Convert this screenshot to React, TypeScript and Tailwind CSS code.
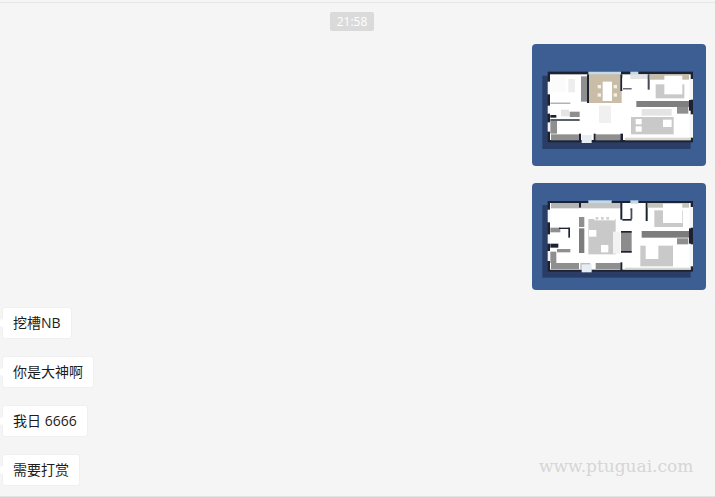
type Block = [number, number, number, number, string]

const WALL = '#1d2433'
const GREY = '#c9c9c9'
const DARK = '#8f8f8f'
const TAN = '#c9bda8'
const PALE = '#c4dbe6'
const LINE = '#e4e4e4'

// coordinates are in 3x px of the reference crop
const planOne: Block[] = [
    [52, 122, 445, 220, '#2a3d66'],
    [68, 110, 436, 212, WALL],
    [75, 118, 422, 197, '#ffffff'],
    [68, 140, 8, 38, '#f4f6f8'],
    [68, 212, 8, 24, '#f4f6f8'],
    [68, 262, 8, 28, '#f4f6f8'],
    [494, 132, 10, 62, '#f4f6f8'],
    [494, 238, 10, 70, '#f4f6f8'],
    [190, 110, 98, 10, PALE],
    [316, 110, 24, 12, PALE],
    [190, 118, 100, 86, TAN],
    [233, 140, 28, 58, '#ffffff'],
    [218, 150, 10, 10, '#f4f0e8'],
    [218, 175, 10, 10, '#f4f0e8'],
    [266, 150, 10, 10, '#f4f0e8'],
    [266, 175, 10, 10, '#f4f0e8'],
    [130, 132, 20, 40, '#eeeeee'],
    [76, 122, 46, 50, '#fbfbfb'],
    [168, 124, 20, 76, DARK],
    [186, 118, 6, 86, WALL],
    [286, 118, 6, 50, WALL],
    [292, 128, 24, 36, '#ffffff'],
    [294, 160, 26, 3, WALL],
    [316, 118, 54, 14, LINE],
    [368, 118, 6, 46, '#444a58'],
    [374, 118, 118, 16, '#c4bba8'],
    [392, 148, 86, 42, GREY],
    [418, 122, 54, 56, '#ffffff'],
    [334, 198, 158, 18, '#7f7f7f'],
    [492, 195, 10, 32, WALL],
    [456, 216, 34, 20, DARK],
    [350, 222, 90, 20, LINE],
    [318, 246, 128, 52, GREY],
    [332, 252, 18, 16, '#ffffff'],
    [332, 274, 18, 16, '#ffffff'],
    [414, 254, 26, 22, '#ffffff'],
    [222, 212, 36, 52, '#f0f0f0'],
    [76, 203, 60, 3, '#8a8e98'],
    [76, 240, 18, 8, WALL],
    [108, 224, 24, 20, LINE],
    [134, 230, 30, 16, DARK],
    [76, 252, 88, 6, '#5a5f6c'],
    [76, 258, 20, 38, DARK],
    [96, 268, 68, 28, '#ffffff'],
    [78, 298, 88, 18, DARK],
    [212, 298, 74, 18, DARK],
    [162, 296, 6, 22, WALL],
    [206, 296, 6, 22, WALL],
    [286, 296, 8, 24, WALL],
    [170, 300, 30, 24, '#e6eef4'],
    [300, 308, 197, 8, '#d8d8d0'],
]

const planTwo: Block[] = [
    [52, 90, 445, 218, '#2a3d66'],
    [68, 78, 436, 212, WALL],
    [75, 84, 422, 200, '#ffffff'],
    [68, 104, 8, 38, '#f4f6f8'],
    [68, 178, 8, 28, '#f4f6f8'],
    [68, 228, 8, 30, '#f4f6f8'],
    [494, 96, 10, 62, '#f4f6f8'],
    [494, 208, 10, 66, '#f4f6f8'],
    [190, 76, 70, 8, PALE],
    [316, 76, 24, 10, PALE],
    [78, 84, 86, 16, '#b4b4b4'],
    [168, 84, 120, 16, '#c4c4c4'],
    [162, 80, 6, 18, WALL],
    [190, 132, 82, 106, GREY],
    [208, 108, 62, 28, '#ffffff'],
    [212, 126, 8, 8, '#d0d0d0'],
    [228, 126, 8, 8, '#d0d0d0'],
    [244, 126, 8, 8, '#d0d0d0'],
    [192, 165, 22, 20, '#ffffff'],
    [228, 210, 22, 22, '#ffffff'],
    [264, 170, 22, 66, '#f2f2f2'],
    [162, 126, 16, 30, DARK],
    [162, 160, 16, 74, '#7c7c7c'],
    [286, 80, 6, 54, WALL],
    [292, 132, 28, 5, WALL],
    [316, 100, 6, 32, '#444a58'],
    [296, 106, 20, 24, '#ffffff'],
    [362, 80, 6, 58, WALL],
    [368, 84, 124, 14, '#c4c4bc'],
    [388, 106, 86, 50, GREY],
    [414, 86, 58, 58, '#ffffff'],
    [350, 168, 142, 20, '#7c7c7c'],
    [492, 160, 10, 46, WALL],
    [456, 190, 34, 18, DARK],
    [346, 212, 98, 62, GREY],
    [362, 206, 38, 46, '#ffffff'],
    [288, 170, 32, 62, '#8c8c8c'],
    [288, 168, 32, 5, WALL],
    [288, 228, 32, 5, WALL],
    [76, 158, 30, 14, DARK],
    [102, 158, 32, 4, WALL],
    [130, 158, 5, 30, WALL],
    [76, 206, 24, 12, WALL],
    [96, 222, 40, 10, DARK],
    [76, 230, 18, 34, DARK],
    [78, 264, 84, 18, DARK],
    [166, 264, 30, 18, '#bdbdbd'],
    [212, 264, 74, 18, DARK],
    [286, 262, 6, 24, WALL],
    [170, 268, 30, 24, '#e6eef4'],
    [300, 278, 197, 6, '#d8d8d0'],
]

const FloorPlan = ({ blocks, viewBox, height, id }: { blocks: Block[]; viewBox: string; height: string; id: string }) => (
    <div className={`w-[174px] overflow-hidden rounded-[4px] bg-[#3c5e93] ${height}`}>
        <svg viewBox={viewBox} className="block h-full w-full">
            <defs>
                <filter id={id}>
                    <feGaussianBlur stdDeviation="2" />
                </filter>
            </defs>
            <g filter={`url(#${id})`}>
                {blocks.map(([x, y, w, h, fill], idx) => (
                    <rect key={idx} x={x} y={y} width={w} height={h} fill={fill} />
                ))}
            </g>
        </svg>
    </div>
)

const Bubble = ({ children }: { children: React.ReactNode }) => (
    <div className="relative self-start rounded-[3px] border border-[#f0f0f0] bg-white px-[10px] text-[14px] leading-[30px] text-[#1c1c1c]">
        <span className="absolute top-[12px] -left-[4px] size-[6px] rotate-45 bg-white" />
        {children}
    </div>
)

const App = () => {
    return (
        <div className="relative flex h-[497px] w-[715px] flex-col overflow-hidden border-b border-[#e2e2e2] bg-[#f5f5f5] pt-[2px] font-['Open_Sans','Noto_Sans_CJK_SC',sans-serif]">
            <div className="flex flex-col border-t border-[#e7e7e7]">
                <div className="mt-[9px] mr-[11px] self-center rounded-[2px] bg-[#dadada] px-[6.5px] text-[12px] leading-[19px] text-white">
                    21:58
                </div>
                <div className="mt-[13px] flex flex-col items-end gap-[17px] pr-[9px]">
                    <FloorPlan blocks={planOne} viewBox="21 27 522 366" height="h-[122px]" id="plan-one" />
                    <FloorPlan blocks={planTwo} viewBox="21 24 522 321" height="h-[107px]" id="plan-two" />
                </div>
                <div className="mt-[17px] flex flex-col gap-[17px] pl-[2px]">
                    <Bubble>挖槽NB</Bubble>
                    <Bubble>你是大神啊</Bubble>
                    <Bubble>我日 6666</Bubble>
                    <Bubble>需要打赏</Bubble>
                </div>
            </div>
            <span className="absolute top-[454px] left-[539px] font-['DejaVu_Serif',serif] text-[17px] leading-[24px] text-[#d6d6d6]">
                www.ptuguai.com
            </span>
        </div>
    )
}

export default App
